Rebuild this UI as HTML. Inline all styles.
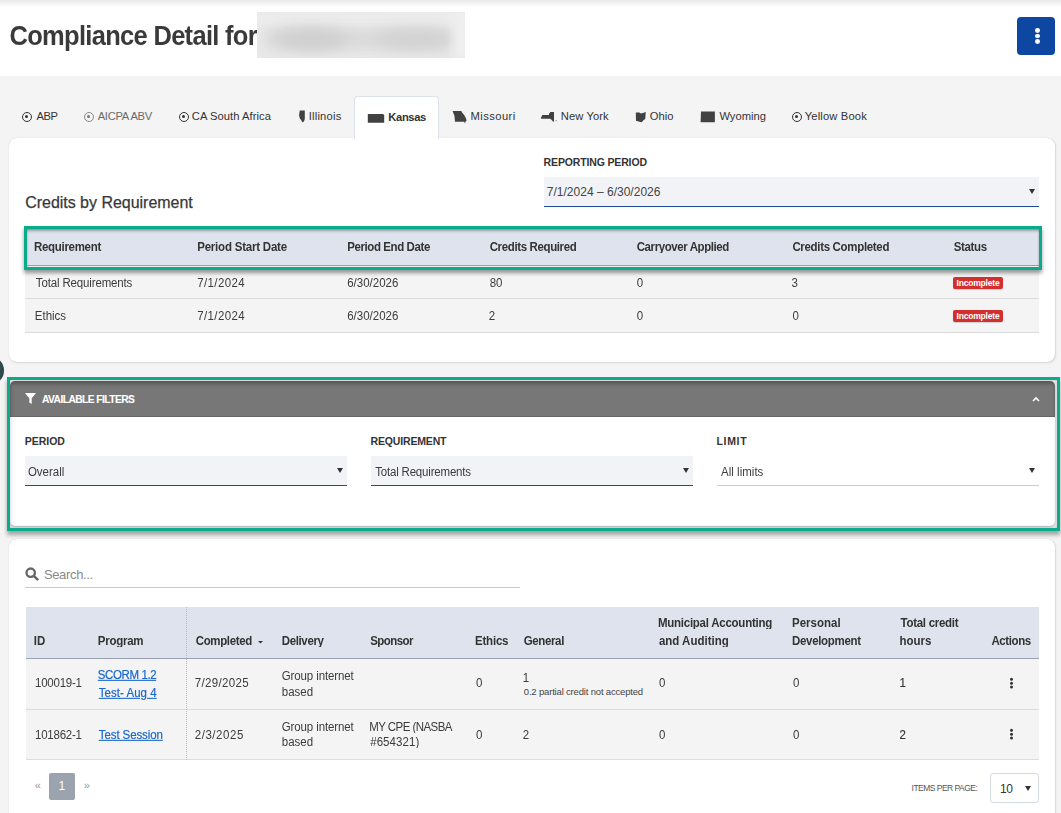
<!DOCTYPE html>
<html>
<head>
<meta charset="utf-8">
<style>
*{box-sizing:border-box;margin:0;padding:0}
html,body{width:1061px;height:813px;overflow:hidden}
body{position:relative;background:#f4f4f4;font-family:"Liberation Sans",sans-serif;color:#333}
.a{position:absolute}
.t{position:absolute;white-space:nowrap;line-height:1}
.card{position:absolute;background:#fff;border-radius:8px;box-shadow:0 0 1px rgba(0,0,0,.22),1px 1px 2px rgba(0,0,0,.1)}
.circ{position:absolute;width:10px;height:10px;border:1.3px solid #333;border-radius:50%}
.circ:after{content:"";position:absolute;left:2.2px;top:2.2px;width:3px;height:3px;border-radius:50%;background:#333}
.sel{position:absolute;height:30px;background:#f2f3f7;border-bottom:1.5px solid #1e4d9b}
.tri{position:absolute;width:0;height:0;border-left:3px solid transparent;border-right:3px solid transparent;border-top:5.5px solid #333}
.badge{position:absolute;width:50px;height:12px;background:#d32f2f;border-radius:2px;color:#fff;font-size:8.5px;font-weight:bold;line-height:12px;text-align:center;letter-spacing:-0.2px;box-shadow:0 1px 1px rgba(0,0,0,.15)}
.green{position:absolute;border:3px solid #0aab8a}
.hd{position:absolute;background:#dee3ed;border-bottom:1px solid #9aa1b3}
.rows{position:absolute;background:#f4f4f4}
.ln{position:absolute;height:1px;background:#dcdcdc}
.circ.lt:after{background:#777}

</style>
</head>
<body>
<!-- header -->
<div class="a" style="left:0;top:0;width:1061px;height:76px;background:#fff"></div>
<div class="a" style="left:0;top:0;width:1061px;height:7px;background:linear-gradient(#e9e9e9,#fff)"></div>
<div class="a" style="left:1017px;top:17px;width:38px;height:38px;background:#0d47a1;border-radius:4px">
  <div class="a" style="left:17.8px;top:11.1px;width:4.8px;height:4.8px;border-radius:50%;background:#fff"></div>
  <div class="a" style="left:17.8px;top:16.5px;width:4.8px;height:4.8px;border-radius:50%;background:#fff"></div>
  <div class="a" style="left:17.8px;top:21.9px;width:4.8px;height:4.8px;border-radius:50%;background:#fff"></div>
</div>

<!-- tabs -->
<div class="circ" style="left:22px;top:112px"></div>
<div class="circ lt" style="left:83.5px;top:112px;border-color:#888"></div>
<div class="circ" style="left:178.5px;top:112px"></div>
<div class="circ" style="left:791.5px;top:112px"></div>

<!-- card 1 -->
<div class="card" style="left:9px;top:138px;width:1046px;height:224px"></div>
<div class="a" style="left:354px;top:96px;width:85px;height:42.5px;background:#fff;border:1px solid #dde2ea;border-bottom:none;border-radius:4px 4px 0 0"></div>
<svg class="a" style="left:298px;top:109.5px" width="8" height="13" viewBox="0 0 8 13"><path d="M1.8 0.6H6.8V9L6.2 10.8L4.9 12.4L3.8 11.5L3.2 10L1.8 8.6L1.1 5.5L1.4 2.8Z" fill="#414141"/></svg>
<svg class="a" style="left:367px;top:113px" width="19" height="11" viewBox="0 0 19 11"><path d="M0.8 1H15.8L16.6 1.6L17.2 2.6V9.7H0.8Z" fill="#414141"/></svg>
<svg class="a" style="left:452px;top:110px" width="16" height="15" viewBox="0 0 16 15"><path d="M0.6 1H9.3L10.6 3.2L12.2 5L13.8 8L14.6 10.6L13.6 11.6L13 13.6L12.2 11.8H3L2.5 6Z" fill="#414141"/></svg>
<svg class="a" style="left:540px;top:111px" width="18" height="12" viewBox="0 0 18 12"><path d="M0.8 6.9L2.4 4.1H8.8L9.2 2.6L10.4 0.9H14V10.8L13 10.5L11.2 8.5L10 7.7H1.4Z" fill="#414141"/><rect x="15.6" y="9.2" width="1.4" height="1" fill="#999"/></svg>
<svg class="a" style="left:635px;top:110.5px" width="12" height="12" viewBox="0 0 12 12"><path d="M0.8 1.4H4.4L5.8 2.4L8.8 1.7L10.7 0.7L10.3 7.9L8.6 9.1L6.8 11.2L3.5 10.6L1 9.8Z" fill="#414141"/></svg>
<svg class="a" style="left:700px;top:110.5px" width="16" height="12" viewBox="0 0 16 12"><path d="M1 0.5H14.9V11.2H0.6Z" fill="#414141"/></svg>


<div class="sel" style="left:544px;top:177px;width:495px"></div>
<div class="tri" style="left:1029px;top:189.3px"></div>
<div class="hd" style="left:25px;top:229px;width:1014px;height:37px"></div>
<div class="rows" style="left:25px;top:267px;width:1014px;height:65px"></div>
<div class="ln" style="left:25px;top:298px;width:1014px"></div>
<div class="ln" style="left:25px;top:332px;width:1014px"></div>
<div class="badge" style="left:953px;top:277px">Incomplete</div>
<div class="badge" style="left:953px;top:310px">Incomplete</div>
<div class="green" style="left:24px;top:226px;width:1018px;height:44px;box-shadow:0 3px 4px rgba(0,0,0,.4),inset 0 3px 3px -1px rgba(0,0,0,.3),inset 0 0 2px rgba(0,0,0,.25)"></div>

<!-- dark circle -->
<div class="a" style="left:-24.9px;top:356.1px;width:28.6px;height:28.6px;border-radius:50%;background:#2e4a4a"></div>

<!-- filters -->
<div class="a" style="left:10px;top:381px;width:1045px;height:145px;background:#fff;border-radius:5px;overflow:hidden;box-shadow:0 1px 2px rgba(0,0,0,.25)">
  <div class="a" style="left:0;top:0;width:1045px;height:36px;background:#777;border-bottom:1px solid #666;box-shadow:inset 0 4px 4px -1px rgba(0,0,0,.25)"></div>
</div>
<div class="green" style="left:7px;top:377px;width:1053px;height:154px;box-shadow:0 4px 4px rgba(0,0,0,.33),inset 0 0 4px rgba(0,0,0,.22)"></div>
<svg class="a" style="left:25px;top:393px" width="11" height="11" viewBox="0 0 11 11"><path d="M0 0H11L6.7 5.2V11L4.3 9.6V5.2Z" fill="#fff"/></svg>
<svg class="a" style="left:1032px;top:396px" width="8" height="6" viewBox="0 0 8 6"><path d="M1 5L4 2L7 5" stroke="#fff" stroke-width="1.6" fill="none"/></svg>
<div class="sel" style="left:25px;top:456px;width:322px"></div>
<div class="tri" style="left:337px;top:468.2px"></div>
<div class="sel" style="left:371px;top:456px;width:322px"></div>
<div class="tri" style="left:683px;top:468.2px"></div>
<div class="sel" style="left:717px;top:456px;width:322px;background:#fff;border-bottom:1px solid #c9ccd2"></div>
<div class="tri" style="left:1029px;top:468.2px"></div>

<!-- card 3 -->
<div class="card" style="left:9px;top:539px;width:1046px;height:300px"></div>
<svg class="a" style="left:25px;top:567px" width="14" height="14" viewBox="0 0 14 14"><circle cx="5.7" cy="5.7" r="4.2" stroke="#666" stroke-width="2.3" fill="none"/><path d="M8.8 8.8L12.4 12.4" stroke="#666" stroke-width="2.5" stroke-linecap="round"/></svg>
<div class="a" style="left:25px;top:587px;width:495px;height:1px;background:#c8ccd3"></div>
<div class="hd" style="left:26px;top:607px;width:1013px;height:52px"></div>
<div class="rows" style="left:26px;top:659px;width:1013px;height:100px"></div>
<div class="ln" style="left:26px;top:709px;width:1013px"></div>
<div class="ln" style="left:26px;top:759px;width:1013px"></div>
<div class="a" style="left:186px;top:607px;width:0;height:153px;border-left:1px dotted #bbb"></div>
<svg class="a" style="left:258.3px;top:640.6px" width="5" height="3" viewBox="0 0 5 3"><path d="M0 0H5L2.5 2.6Z" fill="#333"/></svg>
<svg class="a" style="left:1008.5px;top:676.5px" width="5" height="13" viewBox="0 0 5 13"><circle cx="2.5" cy="2.3" r="1.5" fill="#333"/><circle cx="2.5" cy="6.2" r="1.5" fill="#333"/><circle cx="2.5" cy="10.1" r="1.5" fill="#333"/></svg>
<svg class="a" style="left:1008.5px;top:727.7px" width="5" height="13" viewBox="0 0 5 13"><circle cx="2.5" cy="2.3" r="1.5" fill="#333"/><circle cx="2.5" cy="6.2" r="1.5" fill="#333"/><circle cx="2.5" cy="10.1" r="1.5" fill="#333"/></svg>

<!-- pagination -->
<div class="t" style="left:34.8px;top:780.2px;font-size:11px;color:#999">«</div>
<div class="a" style="left:49px;top:773px;width:26px;height:27px;background:#9aa3ae;border-radius:2px"></div>
<div class="t" style="left:58.5px;top:780px;font-size:12px;color:#fff">1</div>
<div class="t" style="left:83.8px;top:780.2px;font-size:11px;color:#999">»</div>
<div class="a" style="left:990px;top:773px;width:49px;height:30px;border:1px solid #d5d9e0;border-radius:3px;background:#fff"></div>
<div class="tri" style="left:1025px;top:786px"></div>

<div class="t" style="left:9.5px;top:22.5px;font-size:25.5px;font-weight:bold;color:#3a3a3a;transform:scaleY(1.07);transform-origin:0 0;letter-spacing:-0.7px">Compliance Detail for</div>
<div class="t" style="left:36.6px;top:110.9px;font-size:11.2px;font-weight:normal;color:#333;letter-spacing:-0.55px;">ABP</div>
<div class="t" style="left:97.7px;top:110.9px;font-size:11.2px;font-weight:normal;color:#6a6a6a;letter-spacing:-0.312px;">AICPA ABV</div>
<div class="t" style="left:191.8px;top:110.9px;font-size:11.2px;font-weight:normal;color:#333;letter-spacing:0.057px;">CA South Africa</div>
<div class="t" style="left:308.7px;top:110.9px;font-size:11.2px;font-weight:normal;color:#333;letter-spacing:0.214px;">Illinois</div>
<div class="t" style="left:388.3px;top:111.5px;font-size:11.2px;font-weight:bold;color:#333;letter-spacing:-0.36px;">Kansas</div>
<div class="t" style="left:470.6px;top:110.6px;font-size:11.2px;font-weight:normal;color:#333;letter-spacing:0.414px;">Missouri</div>
<div class="t" style="left:560.8px;top:110.7px;font-size:11.2px;font-weight:normal;color:#333;letter-spacing:0.086px;">New York</div>
<div class="t" style="left:649.7px;top:110.7px;font-size:11.2px;font-weight:normal;color:#333;letter-spacing:0.033px;">Ohio</div>
<div class="t" style="left:719.4px;top:110.9px;font-size:11.2px;font-weight:normal;color:#333;">Wyoming</div>
<div class="t" style="left:804.7px;top:110.9px;font-size:11.2px;font-weight:normal;color:#333;letter-spacing:0.15px;">Yellow Book</div>
<div class="t" style="left:25.2px;top:195.0px;font-size:16px;font-weight:normal;color:#383838;letter-spacing:-0.024px;-webkit-text-stroke:0.25px #383838">Credits by Requirement</div>
<div class="t" style="left:543.6px;top:157.0px;font-size:10.5px;font-weight:bold;color:#333;letter-spacing:-0.147px;">REPORTING PERIOD</div>
<div class="t" style="left:546.8px;top:186.4px;font-size:12px;font-weight:normal;color:#444;letter-spacing:0.011px;">7/1/2024 – 6/30/2026</div>
<div class="t" style="left:33.9px;top:241.1px;font-size:11.5px;font-weight:bold;color:#333;letter-spacing:-0.29px;transform:scaleY(1.08);transform-origin:0 0;">Requirement</div>
<div class="t" style="left:197.2px;top:241.1px;font-size:11.5px;font-weight:bold;color:#333;letter-spacing:-0.213px;transform:scaleY(1.08);transform-origin:0 0;">Period Start Date</div>
<div class="t" style="left:347.2px;top:241.1px;font-size:11.5px;font-weight:bold;color:#333;letter-spacing:-0.407px;transform:scaleY(1.08);transform-origin:0 0;">Period End Date</div>
<div class="t" style="left:489.7px;top:241.1px;font-size:11.5px;font-weight:bold;color:#333;letter-spacing:-0.373px;transform:scaleY(1.08);transform-origin:0 0;">Credits Required</div>
<div class="t" style="left:636.7px;top:241.1px;font-size:11.5px;font-weight:bold;color:#333;letter-spacing:-0.412px;transform:scaleY(1.08);transform-origin:0 0;">Carryover Applied</div>
<div class="t" style="left:792.4px;top:241.1px;font-size:11.5px;font-weight:bold;color:#333;letter-spacing:-0.325px;transform:scaleY(1.08);transform-origin:0 0;">Credits Completed</div>
<div class="t" style="left:953.8px;top:241.1px;font-size:11.5px;font-weight:bold;color:#333;letter-spacing:-0.36px;transform:scaleY(1.08);transform-origin:0 0;">Status</div>
<div class="t" style="left:35.8px;top:276.7px;font-size:11.5px;font-weight:normal;color:#3c3c3c;letter-spacing:-0.147px;transform:scaleY(1.08);transform-origin:0 0;">Total Requirements</div>
<div class="t" style="left:197.2px;top:276.7px;font-size:11.5px;font-weight:normal;color:#3c3c3c;letter-spacing:0.386px;transform:scaleY(1.08);transform-origin:0 0;">7/1/2024</div>
<div class="t" style="left:347.2px;top:276.7px;font-size:11.5px;font-weight:normal;color:#3c3c3c;transform:scaleY(1.08);transform-origin:0 0;">6/30/2026</div>
<div class="t" style="left:489.7px;top:276.7px;font-size:11.5px;font-weight:normal;color:#3c3c3c;transform:scaleY(1.08);transform-origin:0 0;">80</div>
<div class="t" style="left:636.7px;top:276.7px;font-size:11.5px;font-weight:normal;color:#3c3c3c;transform:scaleY(1.08);transform-origin:0 0;">0</div>
<div class="t" style="left:791.4px;top:276.7px;font-size:11.5px;font-weight:normal;color:#3c3c3c;transform:scaleY(1.08);transform-origin:0 0;">3</div>
<div class="t" style="left:34.8px;top:309.7px;font-size:11.5px;font-weight:normal;color:#3c3c3c;transform:scaleY(1.08);transform-origin:0 0;">Ethics</div>
<div class="t" style="left:197.2px;top:309.7px;font-size:11.5px;font-weight:normal;color:#3c3c3c;letter-spacing:0.386px;transform:scaleY(1.08);transform-origin:0 0;">7/1/2024</div>
<div class="t" style="left:347.2px;top:309.7px;font-size:11.5px;font-weight:normal;color:#3c3c3c;transform:scaleY(1.08);transform-origin:0 0;">6/30/2026</div>
<div class="t" style="left:488.7px;top:309.7px;font-size:11.5px;font-weight:normal;color:#3c3c3c;transform:scaleY(1.08);transform-origin:0 0;">2</div>
<div class="t" style="left:636.7px;top:309.7px;font-size:11.5px;font-weight:normal;color:#3c3c3c;transform:scaleY(1.08);transform-origin:0 0;">0</div>
<div class="t" style="left:792.4px;top:309.7px;font-size:11.5px;font-weight:normal;color:#3c3c3c;transform:scaleY(1.08);transform-origin:0 0;">0</div>
<div class="t" style="left:42.0px;top:394.8px;font-size:10.2px;font-weight:bold;color:#fff;letter-spacing:-0.531px;-webkit-text-stroke:0.1px #fff">AVAILABLE FILTERS</div>
<div class="t" style="left:24.7px;top:435.9px;font-size:10.5px;font-weight:bold;color:#333;">PERIOD</div>
<div class="t" style="left:370.5px;top:435.9px;font-size:10.5px;font-weight:bold;color:#333;letter-spacing:-0.16px;">REQUIREMENT</div>
<div class="t" style="left:716.5px;top:435.9px;font-size:10.5px;font-weight:bold;color:#333;letter-spacing:0.675px;">LIMIT</div>
<div class="t" style="left:27.9px;top:465.7px;font-size:11.5px;font-weight:normal;color:#3c3c3c;transform:scaleY(1.08);transform-origin:0 0;">Overall</div>
<div class="t" style="left:375.2px;top:465.7px;font-size:11.5px;font-weight:normal;color:#3c3c3c;letter-spacing:-0.188px;transform:scaleY(1.08);transform-origin:0 0;">Total Requirements</div>
<div class="t" style="left:721.0px;top:465.7px;font-size:11.5px;font-weight:normal;color:#3c3c3c;letter-spacing:0.022px;transform:scaleY(1.08);transform-origin:0 0;">All limits</div>
<div class="t" style="left:43.9px;top:567.7px;font-size:13px;font-weight:normal;color:#8a8a8a;letter-spacing:-0.338px;">Search...</div>
<div class="t" style="left:33.7px;top:635.0px;font-size:11.5px;font-weight:bold;color:#333;transform:scaleY(1.08);transform-origin:0 0;">ID</div>
<div class="t" style="left:97.8px;top:635.0px;font-size:11.5px;font-weight:bold;color:#333;letter-spacing:-0.267px;transform:scaleY(1.08);transform-origin:0 0;">Program</div>
<div class="t" style="left:195.7px;top:635.0px;font-size:11.5px;font-weight:bold;color:#333;letter-spacing:-0.35px;transform:scaleY(1.08);transform-origin:0 0;">Completed</div>
<div class="t" style="left:281.7px;top:635.0px;font-size:11.5px;font-weight:bold;color:#333;letter-spacing:-0.357px;transform:scaleY(1.08);transform-origin:0 0;">Delivery</div>
<div class="t" style="left:370.2px;top:635.0px;font-size:11.5px;font-weight:bold;color:#333;letter-spacing:-0.55px;transform:scaleY(1.08);transform-origin:0 0;">Sponsor</div>
<div class="t" style="left:475.0px;top:635.0px;font-size:11.5px;font-weight:bold;color:#333;letter-spacing:-0.2px;transform:scaleY(1.08);transform-origin:0 0;">Ethics</div>
<div class="t" style="left:523.8px;top:635.0px;font-size:11.5px;font-weight:bold;color:#333;letter-spacing:-0.383px;transform:scaleY(1.08);transform-origin:0 0;">General</div>
<div class="t" style="left:991.4px;top:635.0px;font-size:11.5px;font-weight:bold;color:#333;letter-spacing:-0.383px;transform:scaleY(1.08);transform-origin:0 0;">Actions</div>
<div class="t" style="left:658.9px;top:635.0px;font-size:11.5px;font-weight:bold;color:#333;transform:scaleY(1.08);transform-origin:0 0;">and Auditing</div>
<div class="t" style="left:792.0px;top:635.0px;font-size:11.5px;font-weight:bold;color:#333;letter-spacing:-0.32px;transform:scaleY(1.08);transform-origin:0 0;">Development</div>
<div class="t" style="left:899.5px;top:635.0px;font-size:11.5px;font-weight:bold;color:#333;transform:scaleY(1.08);transform-origin:0 0;">hours</div>
<div class="t" style="left:657.9px;top:616.7px;font-size:11.5px;font-weight:bold;color:#333;letter-spacing:-0.247px;transform:scaleY(1.08);transform-origin:0 0;">Municipal Accounting</div>
<div class="t" style="left:792.0px;top:616.7px;font-size:11.5px;font-weight:bold;color:#333;transform:scaleY(1.08);transform-origin:0 0;">Personal</div>
<div class="t" style="left:900.5px;top:616.7px;font-size:11.5px;font-weight:bold;color:#333;letter-spacing:-0.273px;transform:scaleY(1.08);transform-origin:0 0;">Total credit</div>
<div class="t" style="left:35.0px;top:677.4px;font-size:11.5px;font-weight:normal;color:#3c3c3c;letter-spacing:-0.229px;transform:scaleY(1.08);transform-origin:0 0;">100019-1</div>
<div class="t" style="left:97.8px;top:669.3px;font-size:11.5px;font-weight:normal;color:#1967cc;letter-spacing:-0.4px;transform:scaleY(1.08);transform-origin:0 0;text-decoration:underline;-webkit-text-stroke:0.2px #1967cc">SCORM 1.2</div>
<div class="t" style="left:98.8px;top:686.7px;font-size:11.5px;font-weight:normal;color:#1967cc;letter-spacing:0.03px;transform:scaleY(1.08);transform-origin:0 0;text-decoration:underline;-webkit-text-stroke:0.2px #1967cc">Test- Aug 4</div>
<div class="t" style="left:194.7px;top:677.4px;font-size:11.5px;font-weight:normal;color:#3c3c3c;letter-spacing:0.35px;transform:scaleY(1.08);transform-origin:0 0;">7/29/2025</div>
<div class="t" style="left:281.8px;top:669.9px;font-size:11.5px;font-weight:normal;color:#3c3c3c;letter-spacing:-0.123px;transform:scaleY(1.08);transform-origin:0 0;">Group internet</div>
<div class="t" style="left:281.8px;top:685.7px;font-size:11.5px;font-weight:normal;color:#3c3c3c;transform:scaleY(1.08);transform-origin:0 0;">based</div>
<div class="t" style="left:476.0px;top:677.4px;font-size:11.5px;font-weight:normal;color:#3c3c3c;transform:scaleY(1.08);transform-origin:0 0;">0</div>
<div class="t" style="left:522.8px;top:671.6px;font-size:11.5px;font-weight:normal;color:#3c3c3c;transform:scaleY(1.08);transform-origin:0 0;">1</div>
<div class="t" style="left:523.8px;top:687.1px;font-size:9.5px;font-weight:normal;color:#444;letter-spacing:-0.177px;">0.2 partial credit not accepted</div>
<div class="t" style="left:658.9px;top:677.4px;font-size:11.5px;font-weight:normal;color:#3c3c3c;transform:scaleY(1.08);transform-origin:0 0;">0</div>
<div class="t" style="left:793.0px;top:677.4px;font-size:11.5px;font-weight:normal;color:#3c3c3c;transform:scaleY(1.08);transform-origin:0 0;">0</div>
<div class="t" style="left:899.5px;top:677.4px;font-size:11.5px;font-weight:normal;color:#333;transform:scaleY(1.08);transform-origin:0 0;-webkit-text-stroke:0.15px #333">1</div>
<div class="t" style="left:35.0px;top:728.8px;font-size:11.5px;font-weight:normal;color:#3c3c3c;letter-spacing:-0.229px;transform:scaleY(1.08);transform-origin:0 0;">101862-1</div>
<div class="t" style="left:98.8px;top:728.8px;font-size:11.5px;font-weight:normal;color:#1967cc;letter-spacing:-0.1px;transform:scaleY(1.08);transform-origin:0 0;text-decoration:underline;-webkit-text-stroke:0.2px #1967cc">Test Session</div>
<div class="t" style="left:194.7px;top:728.8px;font-size:11.5px;font-weight:normal;color:#3c3c3c;letter-spacing:0.557px;transform:scaleY(1.08);transform-origin:0 0;">2/3/2025</div>
<div class="t" style="left:281.8px;top:720.6px;font-size:11.5px;font-weight:normal;color:#3c3c3c;letter-spacing:-0.123px;transform:scaleY(1.08);transform-origin:0 0;">Group internet</div>
<div class="t" style="left:281.8px;top:735.8px;font-size:11.5px;font-weight:normal;color:#3c3c3c;transform:scaleY(1.08);transform-origin:0 0;">based</div>
<div class="t" style="left:369.2px;top:720.6px;font-size:11.5px;font-weight:normal;color:#3c3c3c;letter-spacing:-0.55px;transform:scaleY(1.08);transform-origin:0 0;">MY CPE (NASBA</div>
<div class="t" style="left:370.2px;top:736.2px;font-size:11.5px;font-weight:normal;color:#3c3c3c;letter-spacing:0.071px;transform:scaleY(1.08);transform-origin:0 0;">#654321)</div>
<div class="t" style="left:476.0px;top:728.8px;font-size:11.5px;font-weight:normal;color:#3c3c3c;transform:scaleY(1.08);transform-origin:0 0;">0</div>
<div class="t" style="left:522.8px;top:728.8px;font-size:11.5px;font-weight:normal;color:#3c3c3c;transform:scaleY(1.08);transform-origin:0 0;">2</div>
<div class="t" style="left:658.9px;top:728.8px;font-size:11.5px;font-weight:normal;color:#3c3c3c;transform:scaleY(1.08);transform-origin:0 0;">0</div>
<div class="t" style="left:793.0px;top:728.8px;font-size:11.5px;font-weight:normal;color:#3c3c3c;transform:scaleY(1.08);transform-origin:0 0;">0</div>
<div class="t" style="left:899.5px;top:728.8px;font-size:11.5px;font-weight:normal;color:#333;transform:scaleY(1.08);transform-origin:0 0;-webkit-text-stroke:0.15px #333">2</div>
<div class="t" style="left:911.6px;top:783.9px;font-size:8.5px;font-weight:normal;color:#555;letter-spacing:-0.521px;">ITEMS PER PAGE:</div>
<div class="t" style="left:1000.1px;top:782.7px;font-size:12px;font-weight:normal;color:#333;letter-spacing:-0.55px;">10</div>
<div class="a" style="left:257px;top:12px;width:208px;height:46px;background:#e8e8e8;overflow:hidden">
  <div class="a" style="left:-10px;top:2px;width:240px;height:10px;background:#eeeeee;filter:blur(5px)"></div>
  <div class="a" style="left:8px;top:18px;width:190px;height:18px;border-radius:9px;background:#d9d9d9;filter:blur(6px)"></div>
  <div class="a" style="left:20px;top:16px;width:70px;height:22px;border-radius:50%;background:#cfcfcf;filter:blur(7px)"></div>
  <div class="a" style="left:120px;top:17px;width:75px;height:20px;border-radius:50%;background:#d2d2d2;filter:blur(7px)"></div>
  <div class="a" style="left:196px;top:0px;width:20px;height:46px;background:#efefef;filter:blur(4px)"></div>
</div>

</body>
</html>
